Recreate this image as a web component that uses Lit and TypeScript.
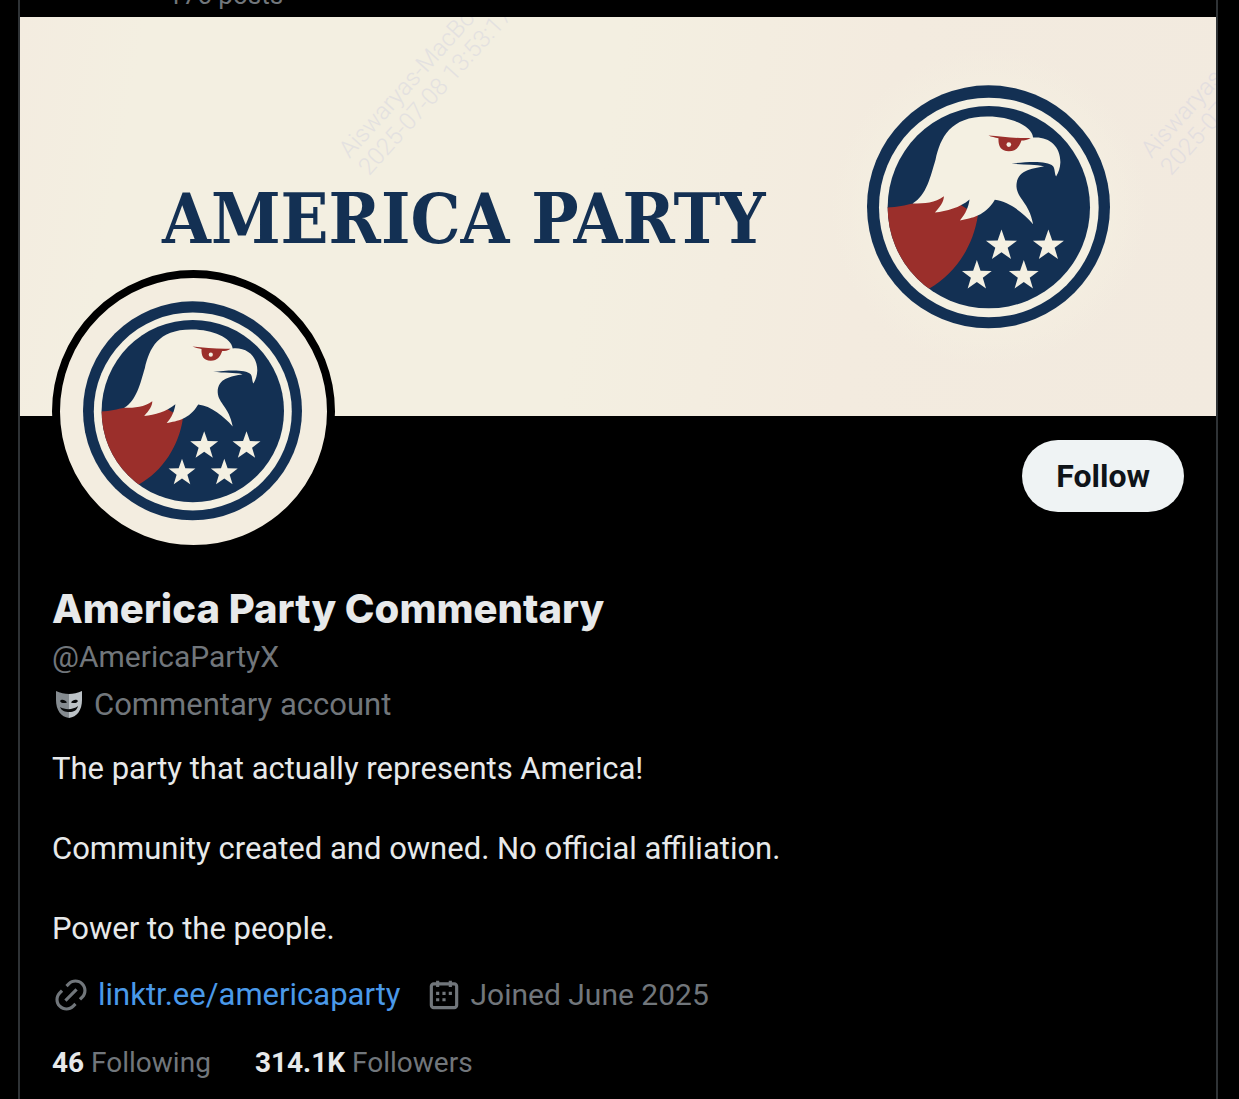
import { LitElement, html, svg, css } from "lit";
import { customElement } from "lit/decorators.js";

const LINK_PATH =
  "M18.36 5.64c-1.95-1.96-5.11-1.96-7.07 0L9.88 7.05 8.46 5.64l1.42-1.42c2.73-2.73 7.16-2.73 9.9 0 2.73 2.74 2.73 7.17 0 9.9l-1.42 1.42-1.41-1.42 1.41-1.41c1.96-1.96 1.96-5.12 0-7.07zm-2.12 3.53l-7.07 7.07-1.41-1.41 7.07-7.07 1.41 1.41zm-12.02.71l1.42-1.42 1.41 1.42-1.41 1.41c-1.96 1.96-1.96 5.12 0 7.07 1.95 1.96 5.11 1.96 7.07 0l1.41-1.41 1.42 1.41-1.42 1.42c-2.73 2.73-7.16 2.73-9.9 0-2.73-2.74-2.73-7.17 0-9.9z";

const CALENDAR_PATH =
  "M7 4V3h2v1h6V3h2v1h1.5C19.89 4 21 5.12 21 6.5v12c0 1.38-1.11 2.5-2.5 2.5h-13C4.12 21 3 19.88 3 18.5v-12C3 5.12 4.12 4 5.5 4H7zm0 2H5.5c-.27 0-.5.22-.5.5v12c0 .28.23.5.5.5h13c.28 0 .5-.22.5-.5v-12c0-.28-.22-.5-.5-.5H17v1h-2V6H9v1H7V6zm0 6h2v-2H7v2zm0 4h2v-2H7v2zm4-4h2v-2h-2v2zm0 4h2v-2h-2v2zm4-4h2v-2h-2v2z";

const STARS = [
  { x: 455, y: 529, r: 49 },
  { x: 596, y: 529, r: 49 },
  { x: 381, y: 619, r: 47 },
  { x: 522, y: 619, r: 47 },
];

/** Corner list of a five-pointed star, one point facing up. */
function starPoints(cx: number, cy: number, r: number): string {
  const points: string[] = [];
  for (let i = 0; i < 10; i++) {
    const radius = i % 2 === 0 ? r : r * 0.4;
    const angle = (Math.PI / 5) * i - Math.PI / 2;
    points.push(
      `${(cx + radius * Math.cos(angle)).toFixed(1)},${(cy + radius * Math.sin(angle)).toFixed(1)}`
    );
  }
  return points.join(" ");
}

@customElement("party-emblem")
export class PartyEmblem extends LitElement {
  static styles = css`
    :host {
      display: block;
    }
    .emblem {
      display: block;
      width: 100%;
      height: auto;
    }
    .navy {
      fill: #133053;
    }
    .cream {
      fill: #f4f0e2;
    }
    .red {
      fill: #9b2f2b;
    }
  `;

  render() {
    return html`
      <svg class="emblem" viewBox="51 46 730 733" role="img" aria-label="Eagle emblem">
        <defs>
          <clipPath id="disc"><circle cx="417" cy="413" r="304" /></clipPath>
        </defs>
        <circle class="navy" cx="416" cy="412" r="365" />
        <circle class="cream" cx="417" cy="414" r="330" />
        <circle class="navy" cx="417" cy="413" r="304" />
        <g clip-path="url(#disc)">
          <path
            class="red"
            d="M100 414C140 415 162 407 190 402L281 375L384 438C370 530 318 612 237 658L150 720L60 600Z"
          />
        </g>
        <path
          class="cream"
          d="M188 402C230 378 242 320 257 270C272 205 300 141 412 141C480 140 546 168 550 204C596 200 632 228 632 278C631 296 627 308 619 321C614 312 616 297 610 290C592 272 530 277 485 282C520 286 555 284 583 290C545 298 500 302 500 350C502 388 538 398 550 464C520 430 478 396 435 391C406 440 366 446 330 453C348 432 356 412 359 390C330 415 290 425 255 429C272 410 282 395 282 380C255 400 225 402 188 402Z"
        />
        <path
          class="red"
          d="M416 198C455 201 500 207 543 205C533 211 524 213 515 213C508 232 500 245 477 245C452 245 445 229 446 206C436 204 424 202 416 198Z"
        />
        <circle class="cream" cx="477" cy="225" r="7" />
        ${STARS.map(
          (s) => svg`<polygon class="cream" points=${starPoints(s.x, s.y, s.r)} />`
        )}
      </svg>
    `;
  }
}

@customElement("app-root")
export class AppRoot extends LitElement {
  static styles = css`
    :host {
      display: block;
      box-sizing: border-box;
      min-height: 100vh;
      padding: 0 21px 0 18px;
      background: #000;
      color: #e7e9ea;
      font-family: Roboto, "Liberation Sans", sans-serif;
      font-size: 31px;
      line-height: 40px;
    }
    * {
      box-sizing: border-box;
    }
    .column {
      min-height: 100vh;
      border: 2px solid #2f3336;
      border-width: 0 2px;
    }
    .topbar {
      display: flex;
      align-items: flex-end;
      height: 17px;
      padding: 0 148px 6px;
      overflow: hidden;
      color: #71767b;
      font-size: 26px;
      line-height: 32px;
    }
    .banner {
      position: relative;
      display: flex;
      align-items: center;
      justify-content: space-between;
      aspect-ratio: 3 / 1;
      padding: 0 106px 18px 142px;
      overflow: hidden;
      background: radial-gradient(circle at 81% 48%, #f4efe1 0 10%, #f4efe100 16%),
        linear-gradient(100deg, #f3ece0 0, #f3efe1 10%, #f3efe1 48%, #f3ebdf 70%, #f2eadf 100%);
    }
    .wordmark {
      padding-top: 24px;
      color: #133053;
      font-family: "DejaVu Serif Condensed", "DejaVu Serif", serif;
      font-weight: 700;
      font-size: 70px;
      line-height: 80px;
      white-space: nowrap;
    }
    .banner-emblem {
      flex: none;
      width: 243px;
    }
    .watermark {
      position: absolute;
      top: 128px;
      left: 314px;
      transform: rotate(-48deg);
      transform-origin: 0 0;
      color: #d5d4e0;
      opacity: 0.5;
      font-weight: 300;
      font-size: 24px;
      line-height: 26px;
      white-space: pre;
    }
    .watermark.second {
      left: 1116px;
    }
    .actions {
      display: flex;
      align-items: flex-start;
      justify-content: space-between;
      padding: 0 32px;
    }
    .avatar {
      position: relative;
      flex: none;
      width: 283px;
      height: 283px;
      margin-top: -146px;
      padding: 23px 25px 25px 23px;
      border: 8px solid #000;
      border-radius: 50%;
      background: #f3ede0;
    }
    .follow {
      height: 72px;
      margin-top: 24px;
      padding: 0 34px;
      border: 0;
      border-radius: 36px;
      background: #eff3f4;
      color: #0f1419;
      font: inherit;
      font-size: 32px;
      font-weight: 700;
    }
    .info {
      display: flex;
      flex-direction: column;
      padding: 32px 32px 16px;
    }
    .name {
      margin: 0;
      font-family: Inter, Roboto, sans-serif;
      font-weight: 800;
      font-size: 40px;
      line-height: 48px;
    }
    .muted {
      color: #71767b;
    }
    .handle {
      margin-top: 4px;
      font-size: 30px;
    }
    .category {
      display: flex;
      align-items: center;
      gap: 8px;
      margin-top: 8px;
    }
    .mask {
      width: 34px;
      height: 34px;
    }
    .bio {
      margin: 24px 0 0;
      white-space: pre-line;
    }
    .meta {
      display: flex;
      flex-wrap: wrap;
      gap: 24px;
      margin-top: 26px;
    }
    .meta-item {
      display: flex;
      align-items: center;
      gap: 8px;
    }
    .icon {
      width: 38px;
      height: 38px;
      fill: #71767b;
    }
    .joined {
      font-size: 30px;
    }
    .url {
      color: #4a99e9;
      text-decoration: none;
    }
    .stats {
      display: flex;
      flex-wrap: wrap;
      gap: 44px;
      margin-top: 28px;
      font-size: 28px;
    }
    .stat {
      color: #71767b;
      text-decoration: none;
    }
    .count {
      color: #e7e9ea;
      font-weight: 700;
    }
  `;

  render() {
    const watermark = "Aiswaryas-MacBook\n2025-07-08 13:53:17";
    const bio =
      "The party that actually represents America!\n\nCommunity created and owned. No official affiliation.\n\nPower to the people.";
    return html`
      <main class="column">
        <div class="topbar"><span>176 posts</span></div>
        <div class="banner">
          <div class="wordmark">AMERICA PARTY</div>
          <party-emblem class="banner-emblem"></party-emblem>
          <div class="watermark" aria-hidden="true">${watermark}</div>
          <div class="watermark second" aria-hidden="true">${watermark}</div>
        </div>
        <div class="actions">
          <div class="avatar"><party-emblem></party-emblem></div>
          <button class="follow" type="button">Follow</button>
        </div>
        <section class="info">
          <h1 class="name">America Party Commentary</h1>
          <div class="handle muted">@AmericaPartyX</div>
          <div class="category muted">
            <svg class="mask" viewBox="0 0 34 34" aria-hidden="true">
              <path fill="#858b90" d="M4 3C8 5 13 6 17 6V30C9 29 4 22 4 12Z" />
              <path fill="#bcc2c6" d="M30 3C26 5 21 6 17 6V30C25 29 30 22 30 12Z" />
              <path
                fill="#08090a"
                d="M8 13C9 11 13 11 15 14.500C12 15.500 9.500 15.500 8 13ZM26 13C25 11 21 11 19 14.500C22 15.500 24.500 15.500 26 13ZM8 19C13 22 21 22 26 18C25 22.500 21.500 24 17.500 24C13 24 9.500 23 8 19Z"
              />
            </svg>
            <span>Commentary account</span>
          </div>
          <p class="bio">${bio}</p>
          <div class="meta muted">
            <div class="meta-item">
              <svg class="icon" viewBox="0 0 24 24" aria-hidden="true"><path d=${LINK_PATH} /></svg>
              <a class="url" href="https://linktr.ee/americaparty">linktr.ee/americaparty</a>
            </div>
            <div class="meta-item">
              <svg class="icon" viewBox="0 0 24 24" aria-hidden="true"><path d=${CALENDAR_PATH} /></svg>
              <span class="joined">Joined June 2025</span>
            </div>
          </div>
          <div class="stats">
            <a class="stat" href="#following"><span class="count">46</span> Following</a>
            <a class="stat" href="#followers"><span class="count">314.1K</span> Followers</a>
          </div>
        </section>
      </main>
    `;
  }
}
